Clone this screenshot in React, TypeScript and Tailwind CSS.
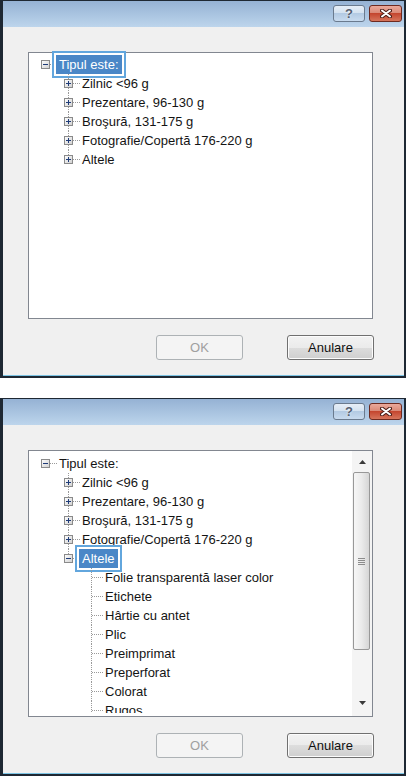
import { useId } from "react";

type CellSpec = { v?: "full" | "top"; h?: boolean; exp?: "plus" | "minus" } | null;

type Row = {
  label: string;
  cells: CellSpec[];
  selected?: boolean;
};

const child = (label: string): Row => ({
  label,
  cells: [null, { v: "full", h: true, exp: "plus" }],
});

const leaf = (label: string): Row => ({
  label,
  cells: [null, null, { v: "full", h: true }],
});

const firstRows: Row[] = [
  { label: "Tipul este:", cells: [{ h: true, exp: "minus" }], selected: true },
  child("Zilnic <96 g"),
  child("Prezentare, 96-130 g"),
  child("Broşură, 131-175 g"),
  child("Fotografie/Copertă 176-220 g"),
  { label: "Altele", cells: [null, { v: "top", h: true, exp: "plus" }] },
];

const secondRows: Row[] = [
  { label: "Tipul este:", cells: [{ h: true, exp: "minus" }] },
  child("Zilnic <96 g"),
  child("Prezentare, 96-130 g"),
  child("Broşură, 131-175 g"),
  child("Fotografie/Copertă 176-220 g"),
  { label: "Altele", cells: [null, { v: "top", h: true, exp: "minus" }], selected: true },
  leaf("Folie transparentă laser color"),
  leaf("Etichete"),
  leaf("Hârtie cu antet"),
  leaf("Plic"),
  leaf("Preimprimat"),
  leaf("Preperforat"),
  leaf("Colorat"),
  leaf("Rugos"),
];

function Cell({ spec }: { spec: CellSpec }) {
  const id = useId();
  return (
    <svg width="23" height="19" viewBox="0 0 23 19" className="shrink-0">
      {spec?.v && (
        <line
          x1="11.5"
          y1="0"
          x2="11.5"
          y2={spec.v === "full" ? 19 : 10}
          stroke="#9a9a9a"
          strokeDasharray="1 1"
        />
      )}
      {spec?.h && (
        <line x1="12" y1="9.5" x2="23" y2="9.5" stroke="#9a9a9a" strokeDasharray="1 1" />
      )}
      {spec?.exp && (
        <>
          <defs>
            <linearGradient id={id} x1="0" y1="0" x2="1" y2="1">
              <stop offset="0" stopColor="#ffffff" />
              <stop offset="1" stopColor="#cfcfcf" />
            </linearGradient>
          </defs>
          <rect x="7.5" y="5.5" width="8" height="8" fill={`url(#${id})`} stroke="#8a8a8a" />
          <line x1="9" y1="9.5" x2="14" y2="9.5" stroke="#1f3c78" />
          {spec.exp === "plus" && <line x1="11.5" y1="7" x2="11.5" y2="12" stroke="#1f3c78" />}
        </>
      )}
    </svg>
  );
}

function TreeRow({ row }: { row: Row }) {
  return (
    <div className="flex h-[19px] items-center">
      {row.cells.map((c, i) => (
        <Cell key={i} spec={c} />
      ))}
      {row.selected ? (
        <span className="-my-[4px] -ml-[5px] shrink-0 border-2 border-[#62a6dd] bg-white p-[2px]">
          <span className="block whitespace-nowrap bg-[#4a87c7] px-[3px] leading-[19px] text-white">
            {row.label}
          </span>
        </span>
      ) : (
        <span className="ml-[2px] whitespace-nowrap leading-[19px] text-[#141414]">{row.label}</span>
      )}
    </div>
  );
}

function ScrollBar() {
  return (
    <div className="flex w-[20px] shrink-0 flex-col bg-[#f4f4f4]">
      <div className="flex h-[21px] items-center justify-center">
        <svg width="7" height="4" viewBox="0 0 7 4">
          <path d="M3.5 0L7 4H0Z" fill="#3a3a3a" />
        </svg>
      </div>
      <div className="ml-[1px] mr-[2px] flex h-[178px] items-center justify-center rounded-[2px] border border-[#989898] bg-gradient-to-r from-[#f6f6f6] via-[#ebebeb] to-[#d6d6d6]">
        <div className="flex flex-col gap-[1px]">
          <div className="h-[1px] w-[7px] bg-[#8c8c8c]" />
          <div className="h-[1px] w-[7px] bg-[#8c8c8c]" />
          <div className="h-[1px] w-[7px] bg-[#8c8c8c]" />
          <div className="h-[1px] w-[7px] bg-[#8c8c8c]" />
        </div>
      </div>
      <div className="flex-1" />
      <div className="flex h-[26px] items-center justify-center">
        <svg width="7" height="4" viewBox="0 0 7 4">
          <path d="M0 0H7L3.5 4Z" fill="#3a3a3a" />
        </svg>
      </div>
    </div>
  );
}

function TitleButtons() {
  return (
    <div className="flex h-[26px] shrink-0 items-start justify-end gap-[4px] bg-gradient-to-b from-[#95b2d4] to-[#bdd5ec] pr-[2px] pt-[4px]">
      <div className="flex h-[17px] w-[32px] items-center justify-center rounded-[3px] border border-[#6a7a8e] bg-[linear-gradient(#e6eef7_0%,#d4e2f0_45%,#b3cae3_50%,#c8dbef_100%)]">
        <span className="text-[13px] font-bold leading-none text-[#556070] [text-shadow:0_0_2px_#fff]">?</span>
      </div>
      <div className="flex h-[17px] w-[33px] items-center justify-center rounded-[3px] border border-[#6d2a20] bg-[linear-gradient(#eaa99b_0%,#da8a78_45%,#c4462f_50%,#d6755c_100%)]">
        <svg width="12" height="9" viewBox="0 0 12 9">
          <path d="M2 1.5L10 7.5M10 1.5L2 7.5" stroke="#4a1c16" strokeWidth="4" strokeLinecap="round" />
          <path d="M2 1.5L10 7.5M10 1.5L2 7.5" stroke="#ffffff" strokeWidth="2" strokeLinecap="round" />
        </svg>
      </div>
    </div>
  );
}

function Dialog({ rows, scroll }: { rows: Row[]; scroll?: boolean }) {
  return (
    <div className="flex h-[378px] w-[406px] shrink-0 flex-col border-b-2 border-l-[3px] border-r-2 border-t border-[#1e2833] bg-[#f0f0f0]">
      <TitleButtons />
      <div className="flex flex-1 flex-col border-b border-[#7cc3e3]">
        <div
          className={`ml-[25px] mt-[25px] flex h-[267px] w-[345px] border border-[#828790] bg-white ${
            scroll ? "overflow-hidden" : ""
          }`}
        >
          <div
            className={`min-w-0 flex-1 pl-[5px] ${scroll ? "mb-[3px] overflow-hidden pt-[3px]" : "pt-[2px]"}`}
          >
            {rows.map((r, i) => (
              <TreeRow key={i} row={r} />
            ))}
          </div>
          {scroll && <ScrollBar />}
        </div>
        <div className="mt-[16px] flex gap-[44px] pl-[153px]">
          <div className="flex h-[25px] w-[87px] items-center justify-center rounded-[3px] border border-[#adb2b5] bg-[#f4f4f4] text-[#a0a0a0]">
            OK
          </div>
          <div className="flex h-[25px] w-[87px] items-center justify-center rounded-[3px] border border-[#707070] bg-[linear-gradient(#f2f2f2_0%,#ebebeb_50%,#dddddd_50%,#cfcfcf_100%)] text-[#111] shadow-[inset_0_0_0_1px_#fcfcfc]">
            Anulare
          </div>
        </div>
      </div>
    </div>
  );
}

export default function App() {
  return (
    <div className="flex h-[776px] w-[407px] flex-col gap-[20px] overflow-hidden bg-white font-['Liberation_Sans',Arial,sans-serif] text-[13px]">
      <Dialog rows={firstRows} />
      <Dialog rows={secondRows} scroll />
    </div>
  );
}
